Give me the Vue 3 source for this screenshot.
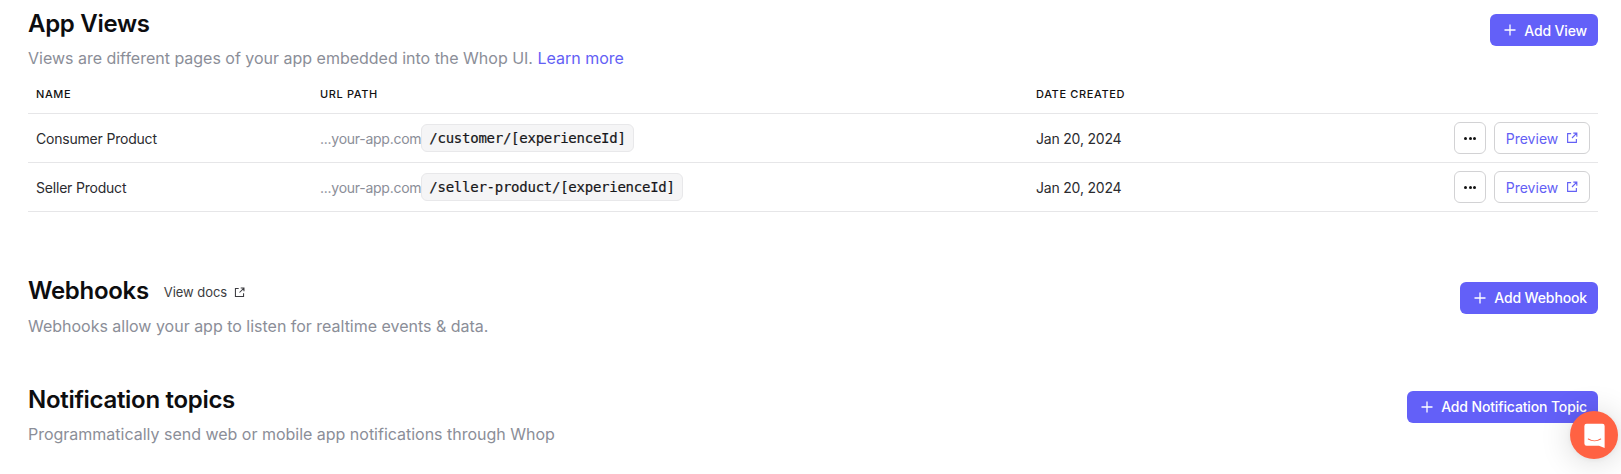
<script setup>
const rows = [
  { name: 'Consumer Product', path: '/customer/[experienceId]', date: 'Jan 20, 2024' },
  { name: 'Seller Product', path: '/seller-product/[experienceId]', date: 'Jan 20, 2024' },
]
</script>

<template>
  <main class="page">
    <section class="views">
      <header class="head">
        <div>
          <h2>App Views</h2>
          <p>Views are different pages of your app embedded into the Whop UI. <a class="learn">Learn more</a></p>
        </div>
        <button class="add">
          <svg viewBox="0 0 16 16" class="plus"><path d="M8 2.5v11M2.5 8h11" /></svg>
          <span class="lbl">Add View</span>
        </button>
      </header>
      <div class="table">
        <div class="row hdr">
          <div class="c1">NAME</div>
          <div class="c2">URL PATH</div>
          <div class="c3">DATE CREATED</div>
          <div class="c4"></div>
        </div>
        <div class="row" v-for="r in rows" :key="r.name">
          <div class="c1">{{ r.name }}</div>
          <div class="c2 url"><span class="host">...your-app.com</span><code>{{ r.path }}</code></div>
          <div class="c3">{{ r.date }}</div>
          <div class="c4">
            <button class="dots" aria-label="More"><i></i><i></i><i></i></button>
            <button class="preview">
              <span class="lbl">Preview</span>
              <svg viewBox="0 0 16 16" class="ext"><path d="M7 3H3v10h10V9M9.5 2.5h4v4M13.5 2.5L8 8" /></svg>
            </button>
          </div>
        </div>
      </div>
    </section>

    <section class="hooks">
      <header class="head">
        <div>
          <div class="title-line">
            <h2>Webhooks</h2>
            <a class="docs">View docs
              <svg viewBox="0 0 16 16" class="ext"><path d="M7 3H3v10h10V9M9.5 2.5h4v4M13.5 2.5L8 8" /></svg>
            </a>
          </div>
          <p>Webhooks allow your app to listen for realtime events &amp; data.</p>
        </div>
        <button class="add">
          <svg viewBox="0 0 16 16" class="plus"><path d="M8 2.5v11M2.5 8h11" /></svg>
          <span>Add Webhook</span>
        </button>
      </header>
    </section>

    <section class="topics">
      <header class="head">
        <div>
          <h2>Notification topics</h2>
          <p>Programmatically send web or mobile app notifications through Whop</p>
        </div>
        <button class="add">
          <svg viewBox="0 0 16 16" class="plus"><path d="M8 2.5v11M2.5 8h11" /></svg>
          <span>Add Notification Topic</span>
        </button>
      </header>
    </section>

    <button class="chat" aria-label="Chat">
      <svg viewBox="0 0 24 24" width="27" height="27">
        <path fill="#fff" d="M5 1.5h14a2 2 0 0 1 2 2V23l-5-1.9H5a2 2 0 0 1-2-2V3.500a2 2 0 0 1 2-2z" />
        <path fill="none" stroke="#ff6243" stroke-width="1" stroke-linecap="round" d="M6.500 15.200c3.200 2 7.800 2 11 0" />
      </svg>
    </button>
  </main>
</template>

<style>
html, body { margin: 0; background: #fff; overflow: hidden; }
</style>

<style scoped>
.page {
  box-sizing: border-box;
  height: 474px;
  padding: 8px 23px 0 28px;
  font-family: Inter, "Liberation Sans", sans-serif;
  color: #111;
  overflow: hidden;
}
.head { display: flex; justify-content: space-between; align-items: flex-start; }
h2 { margin: 0; font-size: 24px; line-height: 32px; font-weight: 600; letter-spacing: -0.3px; color: #0d0d0f; }
p { margin: 6px 0 0; font-size: 16px; line-height: 24px; color: #8b8e98; letter-spacing: -0.01px; }
.learn { color: #6360f5; }
.add {
  display: flex; align-items: center; gap: 6px;
  height: 32px; margin-top: 6px; padding: 0 11px 0 12px;
  border: 0; border-radius: 6px; background: #6360f8; color: #fff;
  font: 500 14px/20px Inter, sans-serif; letter-spacing: -0.14px; white-space: nowrap;
}
.lbl { padding-top: 1px; }
.plus { width: 16px; height: 16px; fill: none; stroke: #fff; stroke-width: 1.300; }
.table { margin-top: 4px; }
.row {
  display: grid; grid-template-columns: 284px 716px 1fr auto;
  align-items: center; height: 48px; padding: 0 8px;
  border-bottom: 1px solid #e6e6e8;
  font-size: 14px; letter-spacing: -0.2px; color: #2b2b2f;
}
.hdr { box-sizing: border-box; height: 40px; padding-top: 1px; font-size: 11px; font-weight: 500; letter-spacing: 0.62px; color: #111; }
.url { display: flex; align-items: center; }
.host { color: #8b8e98; letter-spacing: -0.26px; }
code {
  font-family: "DejaVu Sans Mono", "Liberation Mono", monospace;
  font-size: 14px; letter-spacing: -0.25px; -webkit-text-stroke: 0.2px #17171a; color: #17171a;
  padding: 3px 7px; background: #f5f5f6; border: 1px solid #e8e8ea; border-radius: 6px; line-height: 20px;
}
.c4 { display: flex; gap: 8px; }
.dots, .preview {
  box-sizing: border-box; height: 32px; background: #fff;
  border: 1px solid #d2d2d4; border-radius: 6px;
}
.dots { width: 32px; display: flex; align-items: center; justify-content: center; gap: 1.500px; padding: 0; }
.dots i { width: 3px; height: 3px; border-radius: 50%; background: #111; }
.preview {
  width: 96px; display: flex; align-items: center; justify-content: center; gap: 7px;
  padding: 0 0 0 1px; color: #6360f5; font: 400 14px/20px Inter, sans-serif;
}
.ext { width: 14px; height: 14px; fill: none; stroke: currentColor; stroke-width: 1.300; }
.hooks { margin-top: 64px; }
.title-line { display: flex; align-items: center; gap: 15px; }
.title-line h2 { margin-top: -1px; margin-bottom: 1px; }
.docs { display: flex; align-items: center; gap: 6px; font-size: 13px; letter-spacing: -0.05px; color: #3c3c40; }
.docs .ext { width: 13px; height: 13px; }
.topics { margin-top: 47px; }
.topics h2 { margin-top: -1px; margin-bottom: 1px; }
.chat {
  position: fixed; left: 1570px; top: 411px; width: 48px; height: 48px;
  display: flex; align-items: center; justify-content: center; padding: 0;
  border: 0; border-radius: 50%; background: #ff6243;
  box-shadow: 0 1px 6px rgba(0,0,0,.06), 0 2px 32px rgba(0,0,0,.16);
}
</style>
